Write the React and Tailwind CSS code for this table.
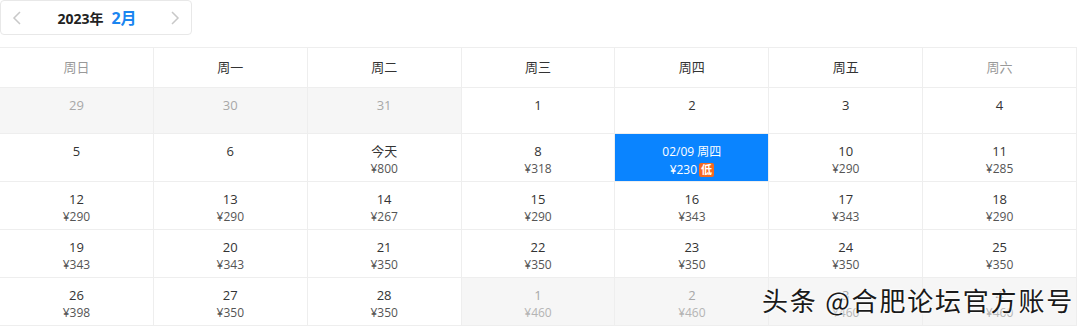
import React from 'react';

const weekdays = [
  { label: '周日', weekend: true },
  { label: '周一' },
  { label: '周二' },
  { label: '周三' },
  { label: '周四' },
  { label: '周五' },
  { label: '周六', weekend: true },
];

// type: prev = previous month, next = next month, selected
const weeks = [
  [
    { d: '29', type: 'prev' },
    { d: '30', type: 'prev' },
    { d: '31', type: 'prev' },
    { d: '1' },
    { d: '2' },
    { d: '3' },
    { d: '4' },
  ],
  [
    { d: '5' },
    { d: '6' },
    { d: '今天', p: '¥800' },
    { d: '8', p: '¥318' },
    { d: '02/09 周四', p: '¥230', type: 'selected' },
    { d: '10', p: '¥290' },
    { d: '11', p: '¥285' },
  ],
  [
    { d: '12', p: '¥290' },
    { d: '13', p: '¥290' },
    { d: '14', p: '¥267' },
    { d: '15', p: '¥290' },
    { d: '16', p: '¥343' },
    { d: '17', p: '¥343' },
    { d: '18', p: '¥290' },
  ],
  [
    { d: '19', p: '¥343' },
    { d: '20', p: '¥343' },
    { d: '21', p: '¥350' },
    { d: '22', p: '¥350' },
    { d: '23', p: '¥350' },
    { d: '24', p: '¥350' },
    { d: '25', p: '¥350' },
  ],
  [
    { d: '26', p: '¥398' },
    { d: '27', p: '¥350' },
    { d: '28', p: '¥350' },
    { d: '1', p: '¥460', type: 'next' },
    { d: '2', p: '¥460', type: 'next' },
    { d: '3', p: '¥460', type: 'next' },
    { d: '4', p: '¥460', type: 'next' },
  ],
];

const font = { fontFamily: '"Open Sans", "Noto Sans CJK SC", sans-serif' };

function Cell({ cell }) {
  if (cell.type === 'selected') {
    return (
      <div className="border-r border-b border-[#eeeeee] bg-white">
        <div className="h-full bg-[#0a84ff] text-white flex flex-col items-center pt-[9px]">
          <p className="text-[12px] leading-[18px]">{cell.d}</p>
          <p className="text-[12px] leading-[18px] flex items-center gap-[2px]">
            {cell.p}
            <span className="bg-[#f56a1f] text-white text-[11px] leading-[14px] px-[2px] rounded-[2px] font-bold">低</span>
          </p>
        </div>
      </div>
    );
  }
  const muted = cell.type === 'prev' || cell.type === 'next';
  return (
    <div className={`border-r border-b border-[#eeeeee] flex flex-col items-center pt-[8px] ${muted ? 'bg-[#f6f6f6]' : 'bg-white'}`}>
      <p className={`text-[13px] leading-[18px] ${muted ? 'text-[#a8a8a8]' : 'text-[#333333]'}`}>{cell.d}</p>
      {cell.p && (
        <p className={`text-[12px] leading-[18px] ${muted ? 'text-[#b4b4b4]' : 'text-[#555555]'}`}>{cell.p}</p>
      )}
    </div>
  );
}

export default function App() {
  return (
    <div className="relative w-[1080px] h-[327px] bg-white overflow-hidden" style={font}>
      {/* Month switcher */}
      <div className="w-[192px] h-[35px] border border-[#e8e8e8] rounded-[4px] flex items-center justify-between px-[10px]">
        <svg width="12" height="16" viewBox="0 0 12 16" fill="none">
          <path d="M9 2 L3 8 L9 14" stroke="#c8c8c8" strokeWidth="1.5" />
        </svg>
        <div className="flex items-baseline gap-[8px] ml-[2px]">
          <span className="text-[14px] font-bold text-[#222222]">2023年</span>
          <span className="text-[16px] font-bold text-[#1a85f0]">2月</span>
        </div>
        <svg width="12" height="16" viewBox="0 0 12 16" fill="none">
          <path d="M3 2 L9 8 L3 14" stroke="#c8c8c8" strokeWidth="1.5" />
        </svg>
      </div>

      {/* Calendar */}
      <div className="mt-[12px] w-[1077px] border-t border-[#eeeeee]">
        <div className="grid grid-cols-7 h-[40px]">
          {weekdays.map(w => (
            <div key={w.label} className="border-r border-b border-[#eeeeee] flex items-center justify-center">
              <span className={`text-[13px] ${w.weekend ? 'text-[#999999]' : 'text-[#333333]'}`}>{w.label}</span>
            </div>
          ))}
        </div>
        {weeks.map((row, i) => (
          <div key={i} className={`grid grid-cols-7 ${i === 0 ? 'h-[46px]' : 'h-[48px]'}`}>
            {row.map((c, j) => <Cell key={j} cell={c} />)}
          </div>
        ))}
      </div>

      {/* Watermark */}
      <div
        className="absolute left-[762px] top-[282px] text-[26px] leading-[36px] tracking-[1.8px] text-[#1a1a1a]"
        style={{ fontFamily: '"Noto Sans CJK SC", sans-serif', textShadow: '0 0 2px #fff, 0 0 2px #fff, 0 0 3px #fff' }}
      >
        头条 @合肥论坛官方账号
      </div>
    </div>
  );
}
